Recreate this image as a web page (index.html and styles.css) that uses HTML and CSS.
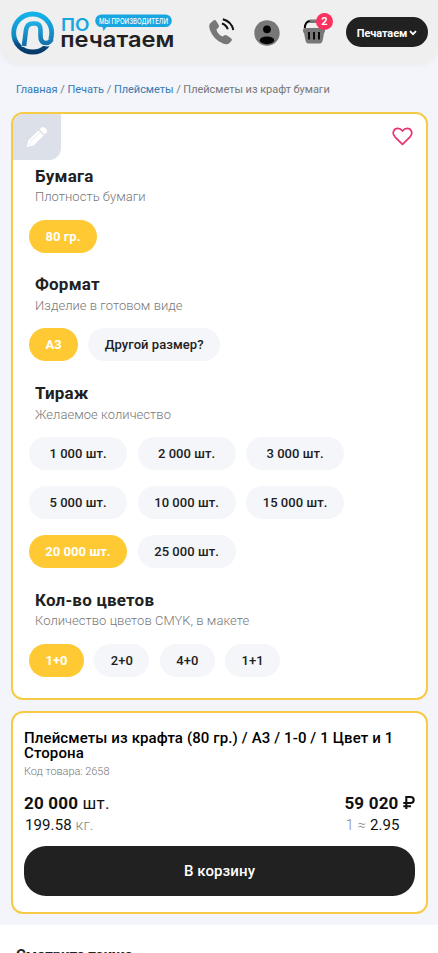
FILE: index.html
```html
<!DOCTYPE html>
<html lang="ru">
<head>
<meta charset="utf-8">
<meta name="viewport" content="width=device-width, initial-scale=1">
<title>Плейсметы из крафт бумаги</title>
<link rel="stylesheet" href="styles.css">
</head>
<body>
<header class="header">
  <a class="logo">
    <svg width="166" height="48" viewBox="0 0 166 48">
      <defs>
        <linearGradient id="ring" x1="0" y1="0" x2="0" y2="1">
          <stop offset="0" stop-color="#14b2ea"/><stop offset=".6" stop-color="#128bc3"/><stop offset=".8" stop-color="#074a80"/><stop offset="1" stop-color="#053968"/>
        </linearGradient>
        <linearGradient id="letter" gradientUnits="userSpaceOnUse" x1="0" y1="12" x2="0" y2="40">
          <stop offset="0" stop-color="#20b5ea"/><stop offset="1" stop-color="#1267a2"/>
        </linearGradient>
      </defs>
      <circle cx="22.7" cy="25" r="19" fill="none" stroke="url(#ring)" stroke-width="4.800"/>
      <path d="M15 39 16.500 22Q17 15.500 23 15.500H25Q30.500 15.500 30.500 22V28Q30.500 35 37 35 40 35 42 32" fill="none" stroke="#efefef" stroke-width="7"/>
      <path d="M14 38 16 22Q17 15.500 23 15.500H25Q30.500 15.500 30.500 22V28Q30.500 35 36 35 40 35 41.500 31" fill="none" stroke="url(#letter)" stroke-width="4.600"/>
      <text class="logo-po" x="51" y="22.700" textLength="28.500" lengthAdjust="spacingAndGlyphs">ПО</text>
      <path d="M91.500 6.500H155.500A6.300 6.300 0 0 1 155.500 19.100H96.500L93.500 23 92.500 19.100H91.500A6.300 6.300 0 0 1 91.500 6.500Z" fill="#17a6df"/>
      <text class="logo-tag" x="89" y="15.700" textLength="69" lengthAdjust="spacingAndGlyphs">МЫ ПРОИЗВОДИТЕЛИ</text>
      <text class="logo-name" x="50.300" y="38.700" textLength="114" lengthAdjust="spacingAndGlyphs">печатаем</text>
    </svg>
  </a>
  <svg class="icon-phone" width="26" height="28" viewBox="0 0 26 28">
    <path d="M1 5.500 4.500 2.500Q6.300 1.500 7.200 3L9.700 7Q10.500 8.600 9.200 9.800L7.400 11.700Q8.500 15.700 13.400 18.600L15.600 17.200Q16.800 16.500 18 17.500L22 20.300Q23.500 21.500 22.400 23L20.500 25Q18 27.200 13.500 25.300 4.500 21.500 1 12 -.5 7.500 1 5.500Z" fill="#777"/>
    <path d="M13 5.500Q17.500 7 18.800 11.300M13.800 1.300Q22.500 3.500 24.300 12" fill="none" stroke="#111" stroke-width="2"/>
  </svg>
  <svg class="icon-user" width="26" height="26" viewBox="0 0 26 26">
    <circle cx="13" cy="13" r="12.700" fill="#777"/><circle cx="13" cy="9.300" r="3.900" fill="#050505"/><ellipse cx="13" cy="20.300" rx="7.200" ry="3.900" fill="#050505"/>
  </svg>
  <div class="basket">
    <svg width="24" height="26" viewBox="0 0 24 26">
      <path d="M7.500 2.300H16Q20 2.300 20.800 9" fill="none" stroke="#777" stroke-width="3.500"/>
      <path d="M2.800 9Q3 2.800 7.800 2" fill="none" stroke="#050505" stroke-width="2"/>
      <path d="M3 9H21Q23 9 23 11V12Q23 13.500 22 14L20.800 21Q20 24.500 17.500 24.500H6.500Q4 24.500 3.400 21L2 14Q1 13.500 1 12V11Q1 9 3 9Z" fill="#777"/>
      <path d="M7 13V20.500M12 13V20.500M17 13V20.500" stroke="#050505" stroke-width="1.900"/>
    </svg>
    <span class="badge">2</span>
  </div>
  <button class="menu">Печатаем<svg width="8" height="6" viewBox="0 0 8 6"><path d="M1 1.200 4 4.200 7 1.200" fill="none" stroke="#fff" stroke-width="1.800"/></svg></button>
</header>

<nav class="crumbs"><a>Главная</a> / <a>Печать</a> / <a>Плейсметы</a> / Плейсметы из крафт бумаги</nav>

<main>
  <section class="card options">
    <span class="edit">
      <svg width="24" height="24" viewBox="0 0 24 24"><path d="M2 22 3.200 15.500 13.500 5.500 18.500 10.500 8.500 20.500ZM14.600 4.400 16.500 2.600Q18 1.400 19.500 2.600L21.500 4.600Q22.700 6 21.500 7.500L19.600 9.400Z" fill="#fff"/><path d="M5.500 16.500 14.500 8M4 20 6 18" stroke="#dce0e9" stroke-width=".8"/></svg>
    </span>
    <svg class="heart" width="21" height="19" viewBox="0 0 22 20"><path d="M11 18.200 3 10.300C-.8 6.200 2.300 1.500 6 1.500 8.500 1.500 10 3 11 4.300 12 3 13.500 1.500 16 1.500 19.700 1.500 22.800 6.200 19 10.300Z" fill="none" stroke="#e8326c" stroke-width="1.800" stroke-linejoin="round"/></svg>
    <div class="group first">
      <h2>Бумага</h2><p>Плотность бумаги</p>
      <div class="pills"><span class="pill on">80 гр.</span></div>
    </div>
    <div class="group second">
      <h2>Формат</h2><p>Изделие в готовом виде</p>
      <div class="pills"><span class="pill on">А3</span><span class="pill">Другой размер?</span></div>
    </div>
    <div class="group third">
      <h2>Тираж</h2><p>Желаемое количество</p>
      <div class="pills runs"><span class="pill">1 000 шт.</span><span class="pill">2 000 шт.</span><span class="pill">3 000 шт.</span><span class="pill">5 000 шт.</span><span class="pill">10 000 шт.</span><span class="pill">15 000 шт.</span><span class="pill on">20 000 шт.</span><span class="pill">25 000 шт.</span></div>
    </div>
    <div class="group">
      <h2>Кол-во цветов</h2><p>Количество цветов CMYK, в макете</p>
      <div class="pills colors"><span class="pill on">1+0</span><span class="pill">2+0</span><span class="pill">4+0</span><span class="pill">1+1</span></div>
    </div>
  </section>

  <section class="card order">
    <h1>Плейсметы из крафта (80 гр.) / А3 / 1-0 / 1 Цвет и 1 Сторона</h1>
    <div class="code">Код товара: 2658</div>
    <div class="totals">
      <div>
        <div class="big"><b>20 000</b> шт.</div>
        <div class="small">199.58 <i>кг.</i></div>
      </div>
      <div>
        <div class="big"><b>59 020</b> <svg width="12" height="14" viewBox="0 0 12 14"><path d="M3.300 14V2H7.500Q10.700 2 10.700 5T7.500 8H.3M.3 11.200H8" fill="none" stroke="#111" stroke-width="2.100"/></svg></div>
        <div class="small"><i>1 ≈</i> 2.95</div>
      </div>
    </div>
    <button class="buy">В корзину</button>
  </section>
</main>
<section class="related"><h2>Смотрите также</h2></section>
</body>
</html>
```
FILE: styles.css
```css
* { box-sizing: border-box; }
html { height: 100%; overflow: hidden; }
body { margin: 0; height: 953px; overflow: hidden; background: #f3f5fa; font-family: Roboto, "Liberation Sans", sans-serif; color: #212121; letter-spacing: .2px; }
h1, h2, p { margin: 0; }
button { border: 0; padding: 0; font-family: inherit; color: #fff; background: #212121; }
.header { height: 64px; background: #efefef; border-radius: 0 0 20px 20px; box-shadow: 0 1px 4px #e8eaf0; display: flex; align-items: flex-start; padding: 0 10px; }
.logo { flex: none; width: 166px; height: 48px; margin-top: 8px; }
.logo svg { display: block; overflow: visible; }
.logo text { font-family: Inter, Roboto, sans-serif; letter-spacing: 0; }
.logo .logo-po { font-size: 17px; font-weight: 600; fill: #17a6df; }
.logo .logo-name { font-size: 22px; font-weight: 600; fill: #212121; }
.logo .logo-tag { font-size: 7.500px; font-weight: 500; fill: #fff; }
.icon-phone { margin: 18px 0 0 33px; }
.icon-user { margin: 20px 0 0 19px; }
.basket { position: relative; width: 24px; margin: 19px 0 0 22px; }
.badge { position: absolute; left: 14px; top: -6px; width: 17px; height: 17px; border-radius: 50%; background: #fb315f; color: #fff; font: 700 11px/17px Roboto, sans-serif; text-align: center; letter-spacing: 0; }
.menu { width: 82px; height: 30px; margin: 17px 0 0 20px; flex: none; border-radius: 15px; font-size: 11px; font-weight: 700; letter-spacing: -.1px; display: flex; align-items: center; justify-content: center; gap: 2px; padding-top: 2px; }
.crumbs { height: 48px; padding: 19px 16px 0; font-size: 11px; line-height: 14px; letter-spacing: -.04px; color: #777; white-space: nowrap; }
.crumbs a { color: #337ab7; }
main { padding: 0 10px 11px 11px; }
.card { background: #fff; border: 2px solid #f6ca45; border-radius: 12px; }
.options { position: relative; height: 588px; padding: 52px 16px 0; }
.edit { position: absolute; left: 0; top: 0; width: 48px; height: 46px; border-radius: 10px 0 12px 0; background: #dce0e9; display: flex; align-items: center; justify-content: center; }
.heart { position: absolute; right: 13px; top: 13px; }
.group { margin-bottom: 21.500px; }
.group.first { margin-bottom: 20.500px; }
.group.second { margin-bottom: 22.500px; }
.group h2 { padding-left: 6px; font-size: 17px; line-height: 20px; font-weight: 700; }
.group p { padding-left: 6px; font-size: 13px; line-height: 21px; font-weight: 300; color: #777; letter-spacing: .04px; }
.pills { display: flex; flex-wrap: wrap; gap: 16px 10px; margin-top: 13px; }
.group.second p, .group.third p { padding-top: 1px; }
.group.second .pills, .group.third .pills { margin-top: 12px; }
.pill { height: 33px; line-height: 33px; border-radius: 17px; padding: 0 16.500px; background: #f4f6fa; font-size: 13px; font-weight: 500; text-align: center; white-space: nowrap; letter-spacing: .05px; }
.pill.on { background: #ffc933; color: #fff; font-weight: 700; }
.pills.runs { display: grid; grid-template-columns: 98px 98px 98px; column-gap: 10.500px; }
.runs .pill { padding: 0; }
.colors { column-gap: 10.400px; }
.colors .pill { width: 55px; padding: 0; }
.order { height: 203px; margin-top: 11px; padding: 18px 11px 0; color: #111; }
.order h1 { font-size: 15px; line-height: 15px; font-weight: 500; color: #000; letter-spacing: .12px; }
.code { margin-top: 4px; font-size: 11px; line-height: 14px; font-weight: 300; color: #777; letter-spacing: -.05px; }
.totals { display: flex; justify-content: space-between; margin-top: 13px; }
.big { font-size: 17px; line-height: 22px; white-space: nowrap; }
.small { font-size: 15px; line-height: 22px; padding-left: 1px; letter-spacing: .1px; }
.small i { font-style: normal; font-weight: 300; color: #888; }
.buy { display: block; width: 100%; height: 50px; margin-top: 10px; border-radius: 22px; font-size: 15px; font-weight: 500; letter-spacing: .1px; }
.related { height: 28px; overflow: hidden; background: #fff; padding: 20px 16px 0; }
.related h2 { font-size: 15px; line-height: 20px; font-weight: 700; letter-spacing: -.1px; }
```
